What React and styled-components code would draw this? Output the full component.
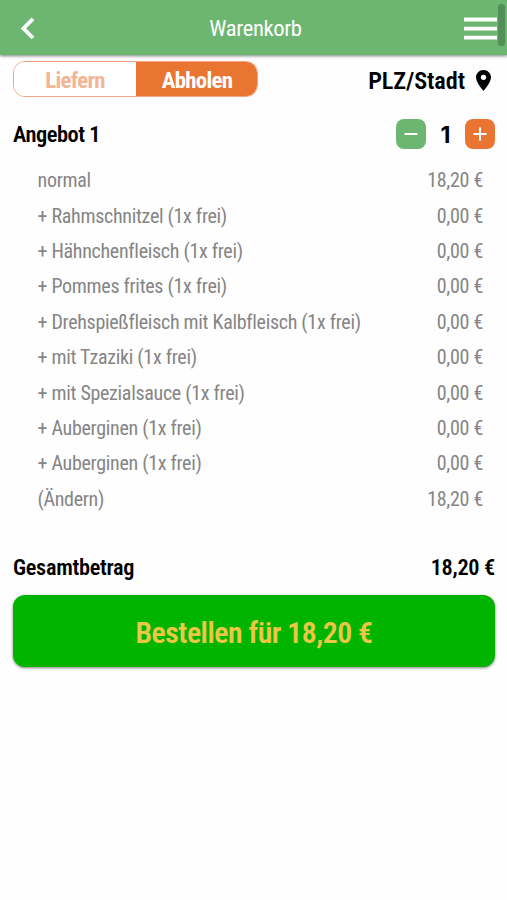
import React from 'react';
import styled, { createGlobalStyle } from 'styled-components';

const GlobalStyle = createGlobalStyle`
  *, *::before, *::after { box-sizing: border-box; }
  body {
    margin: 0;
    background: #fefefe;
    font-family: "Roboto Condensed", Roboto, sans-serif;
    font-stretch: 75%;
    color: #000;
  }
  button { font: inherit; font-stretch: inherit; border: 0; padding: 0; margin: 0; }
`;

const Page = styled.div`
  position: relative;
  width: 100%;
  height: 900px;
  overflow: hidden;
`;

const Header = styled.header`
  display: grid;
  grid-template-columns: 60px 1fr 60px;
  align-items: center;
  height: 55px;
  padding: 2px 9px 0 13px;
  background: #6db672;
  box-shadow: 0 1px 3px rgba(0, 0, 0, 0.5);
  color: #fff;
`;

const Title = styled.h1`
  margin: 0;
  padding-top: 1px;
  font-size: 22.6px;
  font-weight: 400;
  line-height: 28px;
  letter-spacing: -0.35px;
  text-align: center;
`;

const IconButton = styled.button`
  display: flex;
  justify-self: ${p => p.$side};
  background: none;
  color: inherit;
`;

const Scrollbar = styled.div`
  position: absolute;
  top: 4px;
  right: 2px;
  width: 7px;
  height: 42px;
  border-radius: 3px;
  background: #529058;
`;

const Toolbar = styled.div`
  display: flex;
  justify-content: space-between;
  align-items: center;
  height: 36px;
  margin: 6px 16px 0 13px;
`;

const Toggle = styled.div`
  display: flex;
  width: 245px;
  height: 36px;
  border: 1px solid #eda682;
  border-radius: 12px;
  overflow: hidden;
`;

const ToggleOption = styled.button`
  flex: 1;
  padding-top: 2px;
  margin: ${p => (p.$active ? '-1px -1px -1px 0' : '0')};
  background: ${p => (p.$active ? '#ea7532' : '#fff')};
  color: ${p => (p.$active ? '#fff' : '#f4b596')};
  font-size: 22.9px;
  font-weight: 700;
  letter-spacing: -0.75px;
`;

const Location = styled.div`
  display: flex;
  align-items: center;
  gap: 11px;
  padding-top: 2px;
  font-size: 24.3px;
  font-weight: 600;
  letter-spacing: -0.1px;
`;

const ItemHeader = styled.div`
  display: flex;
  justify-content: space-between;
  align-items: center;
  height: 30px;
  margin: 22px 12px 0 13px;
`;

const ItemName = styled.h2`
  margin: -1px 0 0;
  font-size: 22.4px;
  font-weight: 600;
  letter-spacing: -0.45px;
`;

const Stepper = styled.div`
  display: grid;
  grid-template-columns: 30px 39px 30px;
  align-items: center;
`;

const StepButton = styled.button`
  display: grid;
  place-items: center;
  width: 30px;
  height: 30px;
  border-radius: 8px;
  background: ${p => (p.$tone === 'add' ? '#ea7532' : '#6db672')};
  color: #fff;
`;

const Quantity = styled.span`
  padding-top: 1px;
  font-family: Inter, sans-serif;
  font-stretch: 100%;
  font-size: 23px;
  font-weight: 700;
  text-align: center;
`;

const Lines = styled.ul`
  list-style: none;
  margin: 13.5px 24px 0 37.5px;
  padding: 0;
  color: #858585;
  font-size: 20px;
  letter-spacing: -0.3px;
`;

const Line = styled.li`
  display: flex;
  justify-content: space-between;
  align-items: center;
  height: 35.4px;
`;

const Total = styled.div`
  display: flex;
  justify-content: space-between;
  align-items: center;
  height: 30px;
  margin: 36px 12px 0 13px;
  font-size: 22.3px;
  font-weight: 600;
  letter-spacing: -0.3px;
`;

const OrderButton = styled.button`
  display: block;
  width: calc(100% - 25px);
  height: 72px;
  margin: 12.5px 12px 0 13px;
  padding-top: 3px;
  border-radius: 12px;
  background: #00b400;
  box-shadow: 0 1px 3px rgba(0, 0, 0, 0.5);
  color: #eac844;
  font-size: 29.8px;
  font-weight: 600;
  letter-spacing: -0.5px;
`;

const positions = [
  ['normal', '18,20 €'],
  ['+ Rahmschnitzel (1x frei)', '0,00 €'],
  ['+ Hähnchenfleisch (1x frei)', '0,00 €'],
  ['+ Pommes frites (1x frei)', '0,00 €'],
  ['+ Drehspießfleisch mit Kalbfleisch (1x frei)', '0,00 €'],
  ['+ mit Tzaziki (1x frei)', '0,00 €'],
  ['+ mit Spezialsauce (1x frei)', '0,00 €'],
  ['+ Auberginen (1x frei)', '0,00 €'],
  ['+ Auberginen (1x frei)', '0,00 €'],
  ['(Ändern)', '18,20 €'],
];

const BackIcon = () => (
  <svg width="30" height="24" viewBox="0 0 30 24" fill="none" stroke="currentColor" strokeWidth="3.8">
    <path d="M20 1.8 10.4 11.4 20 21" />
  </svg>
);

const MenuIcon = () => (
  <svg width="34" height="24" viewBox="0 0 34 24" fill="currentColor">
    <path d="M0 .6h33v3.8h-33zM0 9.7h33v3.8h-33zM0 18.8h33v3.8h-33z" />
  </svg>
);

const PinIcon = () => (
  <svg width="15" height="21" viewBox="5 2 14 20" preserveAspectRatio="none" fill="currentColor">
    <path d="M12 2C8.13 2 5 5.13 5 9c0 5.25 7 13 7 13s7-7.75 7-13c0-3.87-3.13-7-7-7zm0 9.5a2.5 2.5 0 1 1 0-5 2.5 2.5 0 0 1 0 5z" />
  </svg>
);

const StepIcon = ({ add }) => (
  <svg width="14" height="14" viewBox="0 0 14 14" fill="none" stroke="currentColor" strokeWidth="2">
    <path d={add ? 'M0.5 7h13M7 0.5v13' : 'M0.5 7h13'} />
  </svg>
);

export default function App() {
  return (
    <Page>
      <GlobalStyle />
      <Header>
        <IconButton $side="start" aria-label="Zurück"><BackIcon /></IconButton>
        <Title>Warenkorb</Title>
        <IconButton $side="end" aria-label="Menü"><MenuIcon /></IconButton>
      </Header>
      <Scrollbar />
      <Toolbar>
        <Toggle>
          <ToggleOption>Liefern</ToggleOption>
          <ToggleOption $active>Abholen</ToggleOption>
        </Toggle>
        <Location>PLZ/Stadt<PinIcon /></Location>
      </Toolbar>
      <ItemHeader>
        <ItemName>Angebot 1</ItemName>
        <Stepper>
          <StepButton aria-label="Weniger"><StepIcon /></StepButton>
          <Quantity>1</Quantity>
          <StepButton $tone="add" aria-label="Mehr"><StepIcon add /></StepButton>
        </Stepper>
      </ItemHeader>
      <Lines>
        {positions.map(([label, price], i) => (
          <Line key={i}><span>{label}</span><span>{price}</span></Line>
        ))}
      </Lines>
      <Total><span>Gesamtbetrag</span><span>18,20 €</span></Total>
      <OrderButton>Bestellen für 18,20 €</OrderButton>
    </Page>
  );
}
